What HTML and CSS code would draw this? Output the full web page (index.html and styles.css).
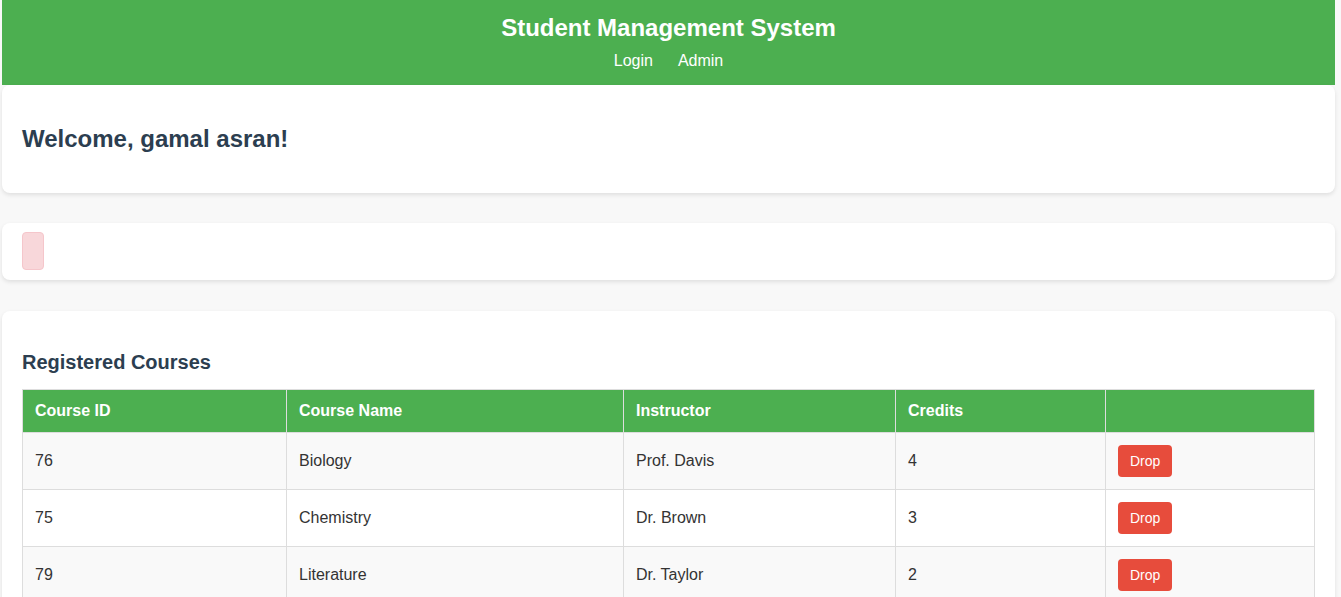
FILE: index.html
```html
<!DOCTYPE html>
<html lang="en">
<head>
<meta charset="utf-8">
<title>Student Management System</title>
<link rel="stylesheet" href="styles.css">
</head>
<body>
<div class="page">
  <header class="site-header">
    <h1 class="site-title">Student Management System</h1>
    <nav class="site-nav">
      <a href="#" class="nav-link">Login</a>
      <a href="#" class="nav-link">Admin</a>
    </nav>
  </header>

  <section class="card card-welcome">
    <h2 class="welcome-title">Welcome, gamal asran!</h2>
  </section>

  <section class="card card-alert">
    <div class="alert"></div>
  </section>

  <section class="card card-courses">
    <h3 class="section-title">Registered Courses</h3>
    <table class="courses">
      <tr>
        <th class="col-id">Course ID</th>
        <th class="col-name">Course Name</th>
        <th class="col-instr">Instructor</th>
        <th class="col-credits">Credits</th>
        <th class="col-action"></th>
      </tr>
      <tr>
        <td>76</td><td>Biology</td><td>Prof. Davis</td><td>4</td>
        <td><button class="btn-drop">Drop</button></td>
      </tr>
      <tr>
        <td>75</td><td>Chemistry</td><td>Dr. Brown</td><td>3</td>
        <td><button class="btn-drop">Drop</button></td>
      </tr>
      <tr>
        <td>79</td><td>Literature</td><td>Dr. Taylor</td><td>2</td>
        <td><button class="btn-drop">Drop</button></td>
      </tr>
    </table>
  </section>
</div>
</body>
</html>
```

FILE: styles.css
```css
html, body {
  margin: 0;
  padding: 0;
  background: #f8f8f8;
  font-family: "Liberation Sans", Arial, sans-serif;
  color: #333;
}

.page {
  margin: 0 6px 0 2px;
}

.site-header {
  background: #4caf50;
  color: #fff;
  text-align: center;
  padding: 14px 0 15px;
}

.site-title {
  margin: 0 0 10px;
  font-size: 24px;
  font-weight: bold;
}

.site-nav {
  display: flex;
  justify-content: center;
  gap: 25px;
  font-size: 16px;
  line-height: 18.4px;
}

.nav-link {
  color: #fff;
  text-decoration: none;
}

.card {
  background: #fff;
  border-radius: 8px;
  box-shadow: 0 2px 4px rgba(0, 0, 0, 0.1);
  padding: 20px;
  margin-bottom: 30px;
}

.welcome-title {
  font-size: 24px;
  margin: 19.92px 0;
  color: #2c3e50;
}

.card-alert {
  padding: 9px 20px 10px;
  margin-bottom: 31px;
}

.alert {
  width: 20px;
  height: 36px;
  background: #f8d7da;
  border: 1px solid #f5c6cb;
  border-radius: 4px;
}

.section-title {
  font-size: 20px;
  margin: 20px 0 15px;
  color: #2c3e50;
}

.courses {
  width: 100%;
  border-collapse: collapse;
  table-layout: fixed;
  font-size: 16px;
}

.courses th,
.courses td {
  border: 1px solid #ddd;
  padding: 12px;
  text-align: left;
  vertical-align: middle;
}

.courses th {
  background: #4caf50;
  color: #fff;
  font-weight: bold;
}

.courses tr:nth-child(even) td {
  background: #f9f9f9;
}

.col-id { width: 239px; }
.col-name { width: 312px; }
.col-instr { width: 247px; }
.col-credits { width: 185px; }

.btn-drop {
  background: #e74c3c;
  color: #fff;
  border: none;
  border-radius: 4px;
  padding: 8px 12px;
  font-family: "Liberation Sans", Arial, sans-serif;
  font-size: 14px;
  line-height: 16px;
  cursor: pointer;
}
```
